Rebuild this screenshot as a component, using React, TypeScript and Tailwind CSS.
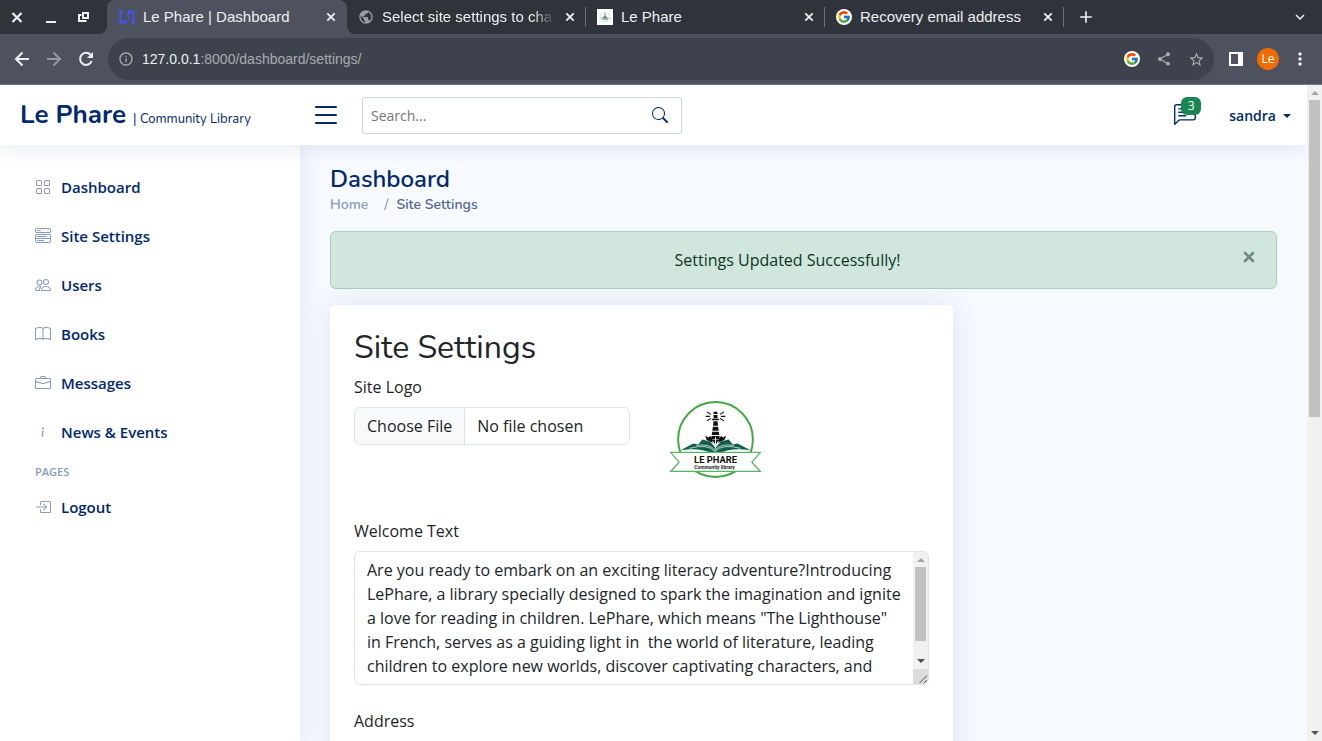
import type { ReactNode } from "react";
import {
  BsBook,
  BsBoxArrowInRight,
  BsBriefcase,
  BsChatLeftText,
  BsGrid,
  BsInfo,
  BsList,
  BsMenuButtonWide,
  BsPeople,
  BsSearch,
} from "react-icons/bs";
import {
  MdAdd,
  MdInfoOutline,
  MdKeyboardArrowDown,
  MdMoreVert,
  MdPublic,
  MdShare,
  MdStarOutline,
} from "react-icons/md";
import { FcGoogle } from "react-icons/fc";

const heading = "font-[Nunito,'Open_Sans',sans-serif]";

function LibraryLogo({ className }: { className: string }) {
  return (
    <svg className={className} viewBox="0 0 125 125" role="img" aria-label="Le Phare Community Library">
      <circle cx="62.5" cy="62.5" r="38" fill="#fff" stroke="#43a843" strokeWidth="2" />
      <g fill="#111">
        <path d="M60.500 35q2-2 4 0v1.500h-4zM60.500 37.500h4v3.500h-4zM59 41.500h7v1.500h-7zM60.500 44h4l.6 4.500h-5.200zM59.800 49.500h5.400l.5 4h-6.400zM59.200 54.500h6.600l.6 3.500h-7.800zM58.500 59h8l.5 3.500h-9z" />
        <path d="M52 58.500l3 2 2.500-1.500 2 4h6l2.500-4 2.500 1.500 3-2-2 4.500-9 4-9-4z" />
      </g>
      <path
        d="M54 34.500l4 2.500M52.500 39h4.500M54 43.500l4-2.500M71 34.500l-4 2.500M72.500 39h-4.500M71 43.500l-4-2.500"
        stroke="#111"
        strokeWidth="1.100"
        fill="none"
      />
      <path
        d="M27 73.500l13-7 5 1 4-5 8 2 5.500 6.500 5.500-6.500 8-2 4 5 5-1 13 7q-20-3-31 3h-9q-11-6-31-3z"
        fill="#0d5f4a"
      />
      <path
        d="M36 71.500q18-5 26 3q8-8 26-3M43 68.500q14-2 19 5q5-7 19-5"
        fill="none"
        stroke="#fff"
        strokeWidth=".7"
      />
      <path d="M62.500 60v12M59.500 64l3 6 3-6" stroke="#fff" strokeWidth="1" fill="none" />
      <path
        d="M17 75.500h91l-8.500 10 8.500 9.500H17l8.500-9.500z"
        fill="#fff"
        stroke="#58b365"
        strokeWidth="1.300"
      />
      <text
        x="62.500"
        y="86"
        textAnchor="middle"
        fontFamily="Roboto, sans-serif"
        fontWeight="700"
        fontSize="9.500"
        fill="#111"
      >
        LE PHARE
      </text>
      <text
        x="61.500"
        y="92.500"
        textAnchor="middle"
        fontFamily="Roboto, sans-serif"
        fontWeight="700"
        fontSize="5"
        fill="#222"
      >
        Community library
      </text>
    </svg>
  );
}

function TabClose({ title }: { title: string }) {
  return (
    <button aria-label={`Close ${title}`} className="shrink-0">
      <svg className="size-4" viewBox="0 0 16 16" stroke="currentColor" strokeWidth="1.800">
        <path d="M4.300 4.300l7.400 7.400M11.700 4.300l-7.400 7.400" />
      </svg>
    </button>
  );
}

function Tab({ icon, title, fade = "" }: { icon: ReactNode; title: string; fade?: string }) {
  return (
    <div className="my-[7px] flex h-5 w-[239px] shrink-0 items-center gap-2 border-r border-[#6a6e78] pr-[7px] pl-[11px]">
      {icon}
      <span className={`flex-1 whitespace-nowrap ${fade}`}>{title}</span>
      <TabClose title={title} />
    </div>
  );
}

function GoogleBadge() {
  return (
    <span className="flex size-4 shrink-0 items-center justify-center rounded-full bg-white">
      <FcGoogle size={14} />
    </span>
  );
}

function BrowserChrome() {
  return (
    <div className="shrink-0 border-b border-[#70747f] bg-[#4e525e] font-['Liberation_Sans',Arial,sans-serif] text-[#eeeff1]">
      <div className="flex h-[34px] bg-[#2f333b] text-[15px]">
        <div className="flex w-[107px] shrink-0 items-center gap-[17px] pl-[9px]">
          <button aria-label="Close window">
            <svg className="size-4" viewBox="0 0 16 16" stroke="currentColor" strokeWidth="2.200">
              <path d="M3.500 4l9 9M12.500 4l-9 9" />
            </svg>
          </button>
          <button aria-label="Minimize window">
            <svg className="size-4" viewBox="0 0 16 16" fill="currentColor">
              <path d="M4 12h10v2H4z" />
            </svg>
          </button>
          <button aria-label="Restore window">
            <svg className="size-4" viewBox="0 0 16 16" fill="none" stroke="currentColor" strokeWidth="2">
              <path d="M8 4h5v5H8zM6.500 6H4v6h6.500v-1" />
            </svg>
          </button>
        </div>
        <div className="relative flex w-60 shrink-0 items-center gap-2 rounded-t-lg bg-[#4e525e] pr-2 pl-3">
          <svg className="absolute bottom-0 -left-2 size-2 text-[#4e525e]" viewBox="0 0 8 8" fill="currentColor">
            <path d="M8 0v8H0a8 8 0 0 0 8-8z" />
          </svg>
          <svg className="absolute -right-2 bottom-0 size-2 text-[#4e525e]" viewBox="0 0 8 8" fill="currentColor">
            <path d="M0 0v8h8a8 8 0 0 1-8-8z" />
          </svg>
          <svg className="size-4 shrink-0" viewBox="0 0 16 16" fill="none" stroke="#4154f1" strokeWidth="2">
            <path d="M1.500 1v12.500h5v-3M14.500 15.500V2.500h-5V9" />
            <path d="M1 1l2.500 2.500M4 13.500L7.500 11M9 5l3-2.500M12.500 13l2.500 2.500" strokeWidth="1.500" />
          </svg>
          <span className="flex-1 whitespace-nowrap">Le Phare | Dashboard</span>
          <TabClose title="Le Phare | Dashboard" />
        </div>
        <Tab
          icon={<MdPublic className="shrink-0 text-[#9a9da6]" size={16} />}
          title="Select site settings to char"
          fade="min-w-0 mask-r-from-88%"
        />
        <Tab
          icon={
            <span className="size-4 shrink-0 bg-white">
              <LibraryLogo className="size-4" />
            </span>
          }
          title="Le Phare"
        />
        <Tab icon={<GoogleBadge />} title="Recovery email address" />
        <button aria-label="New tab" className="ml-3 flex items-center">
          <MdAdd size={20} />
        </button>
        <button aria-label="Search tabs" className="mr-[13px] ml-auto flex items-center">
          <MdKeyboardArrowDown size={18} />
        </button>
      </div>
      <div className="flex h-[50px] items-center">
        <div className="flex w-[108px] shrink-0 items-center gap-3 pl-3">
          <button aria-label="Back">
            <svg className="size-5" viewBox="0 0 20 20" fill="none" stroke="currentColor" strokeWidth="2">
              <path d="M17 10H4.500M10.500 3.500L4 10l6.500 6.500" />
            </svg>
          </button>
          <button aria-label="Forward" className="text-[#9598a1]">
            <svg className="size-5" viewBox="0 0 20 20" fill="none" stroke="currentColor" strokeWidth="2">
              <path d="M3 10h12.500M9.500 3.500L16 10l-6.500 6.500" />
            </svg>
          </button>
          <button aria-label="Reload">
            <svg className="size-5" viewBox="0 0 20 20" fill="none" stroke="currentColor" strokeWidth="2">
              <path d="M15.700 12A6 6 0 1 1 14.500 5.800L16 7.300" />
              <path d="M17 3v6h-6z" fill="currentColor" stroke="none" />
            </svg>
          </button>
        </div>
        <div className="flex h-[42px] flex-1 items-center gap-2 rounded-full bg-[#3e424c] pr-[9px] pl-[10px] text-sm text-[#a9abb1]">
          <MdInfoOutline className="shrink-0" size={16} />
          <span className="flex-1">
            <span className="text-[#eeeff1]">127.0.0.1</span>:8000/dashboard/settings/
          </span>
          <GoogleBadge />
          <button aria-label="Share" className="ml-2">
            <MdShare size={16} />
          </button>
          <button aria-label="Bookmark" className="ml-2">
            <MdStarOutline size={17} />
          </button>
        </div>
        <button aria-label="Side panel" className="ml-[14px]">
          <svg className="size-4" viewBox="0 0 16 16">
            <path d="M1 1h14v14H1z" fill="#fff" />
            <path d="M3 3h7v10H3z" fill="#4e525e" />
          </svg>
        </button>
        <button
          aria-label="Profile"
          className="ml-[13px] size-[22px] rounded-full bg-[#ef6c00] font-['Open_Sans',sans-serif] text-xs text-white"
        >
          Le
        </button>
        <button aria-label="Browser menu" className="mr-3 ml-[11px]">
          <MdMoreVert size={20} />
        </button>
      </div>
    </div>
  );
}

function NavLink({ icon, label }: { icon: ReactNode; label: string }) {
  return (
    <a
      href="#"
      className="mb-[5px] flex h-11 items-center gap-[10px] px-[15px] text-[15px] font-semibold text-[#012970]"
    >
      <span className="text-base text-[#899bbd]">{icon}</span>
      {label}
    </a>
  );
}

function Header() {
  return (
    <header className="z-20 flex h-15 shrink-0 items-center bg-white pl-5 shadow-[0_2px_20px_rgba(1,41,112,0.1)]">
      <a href="#" className={`${heading} flex w-[290px] shrink-0 items-baseline gap-[7px] pb-0.5 text-[#012970]`}>
        <span className="text-[26px] font-bold">Le Phare</span>
        <span className="text-[13px]">| Community Library</span>
      </a>
      <button aria-label="Toggle sidebar" className="text-[#012970]">
        <BsList size={32} />
      </button>
      <form className="ml-5 flex h-[37px] w-80 items-center rounded-[3px] border border-[#012970]/20 pr-[13px] pl-2">
        <input
          type="text"
          name="query"
          aria-label="Search"
          placeholder="Search..."
          className="min-w-0 flex-1 pt-0.5 text-sm outline-none placeholder:text-[#757575]"
        />
        <button type="button" aria-label="Submit search" className="text-[#012970]">
          <BsSearch size={16} />
        </button>
      </form>
      <nav className="ml-auto flex items-center pr-4">
        <a href="#" aria-label="Messages, 3 unread" className="relative mr-[33px] text-[#012970]">
          <BsChatLeftText size={22} />
          <span className="absolute -top-[7px] -right-[5px] flex h-[18px] w-5 items-center justify-center rounded-md bg-[#198754] text-xs text-white">
            3
          </span>
        </a>
        <button className="flex items-center gap-[7px] pt-0.5 text-sm font-semibold text-[#012970]">
          sandra
          <span className="border-x-4 border-t-4 border-x-transparent border-t-[#012970]" />
        </button>
      </nav>
    </header>
  );
}

function Sidebar() {
  return (
    <aside className="z-10 w-[300px] shrink-0 bg-white p-5 shadow-[0_0_20px_rgba(1,41,112,0.1)]">
      <NavLink icon={<BsGrid />} label="Dashboard" />
      <NavLink icon={<BsMenuButtonWide />} label="Site Settings" />
      <NavLink icon={<BsPeople />} label="Users" />
      <NavLink icon={<BsBook />} label="Books" />
      <NavLink icon={<BsBriefcase />} label="Messages" />
      <NavLink icon={<BsInfo />} label="News & Events" />
      <h2 className="mt-[10px] mb-[5px] ml-[15px] text-[11px] leading-4 font-semibold text-[#899bbd]">PAGES</h2>
      <NavLink icon={<BsBoxArrowInRight />} label="Logout" />
    </aside>
  );
}

function TextareaScrollbar() {
  return (
    <div className="absolute top-px right-px bottom-px flex w-[15px] flex-col items-center overflow-hidden rounded-r-[5px] bg-[#f1f1f1]">
      <span className="mt-[6px] border-x-4 border-b-4 border-x-transparent border-b-[#a3a3a3]" />
      <span className="mt-[5px] h-[74px] w-[11px] bg-[#c1c1c1]" />
      <span className="mt-auto mb-[6px] border-x-4 border-t-4 border-x-transparent border-t-[#505050]" />
      <svg className="size-[15px] bg-[#dcdcdc]" viewBox="0 0 15 15" stroke="#555" strokeWidth="1">
        <path d="M6.500 14L14 6.500M11 14l3-3" />
      </svg>
    </div>
  );
}

const welcomeText = `Are you ready to embark on an exciting literacy adventure?Introducing LePhare, a library specially designed to spark the imagination and ignite a love for reading in children. LePhare, which means "The Lighthouse" in French, serves as a guiding light in  the world of literature, leading children to explore new worlds, discover captivating characters, and`;

function Main() {
  return (
    <main className="min-w-0 flex-1 px-[30px] py-5">
      <h1 className={`${heading} mb-[3px] text-[24px] leading-7 font-semibold text-[#012970]`}>Dashboard</h1>
      <nav
        aria-label="Breadcrumb"
        className={`${heading} mb-[17px] flex text-sm leading-[18px] font-semibold text-[#899bbd]`}
      >
        <a href="#" className="mr-4">
          Home
        </a>
        <span className="mr-2">/</span>
        <span className="text-[#51678f]">Site Settings</span>
      </nav>
      <div
        role="alert"
        className="mb-4 flex items-start rounded-md border border-[#a3cfbb] bg-[#d1e7dd] py-4 pl-4 text-[#0a3622]"
      >
        <p className="flex-1 text-center">Settings Updated Successfully!</p>
        <button aria-label="Dismiss" className="flex w-12 justify-end pt-[3px] pr-[21px] text-[#6d8d7f]">
          <svg className="size-3" viewBox="0 0 12 12" stroke="currentColor" strokeWidth="2.600" strokeLinecap="round">
            <path d="M2 2l8 8M10 2l-8 8" />
          </svg>
        </button>
      </div>
      <div className="grid grid-cols-3 gap-6">
        <form className="col-span-2 rounded-[5px] bg-white p-6 text-[#212529] shadow-[0_0_30px_rgba(1,41,112,0.1)]">
          <h2 className={`${heading} mb-2 text-[32px] leading-[38px]`}>Site Settings</h2>
          <div className="mb-4 grid grid-cols-2 gap-6">
            <div>
              <label htmlFor="site-logo" className="mb-2 block">
                Site Logo
              </label>
              <input
                id="site-logo"
                type="file"
                className="block w-full overflow-hidden rounded-md border border-[#dee2e6] px-3 py-1.5 file:-mx-3 file:-my-1.5 file:mr-3 file:border-0 file:border-r file:border-solid file:border-[#dee2e6] file:bg-[#f8f9fa] file:px-3 file:py-1.5"
              />
            </div>
            <div className="flex h-32 items-center">
              <LibraryLogo className="size-[123px]" />
            </div>
          </div>
          <label htmlFor="welcome" className="mb-2 block">
            Welcome Text
          </label>
          <div className="relative mb-6">
            <textarea
              id="welcome"
              rows={5}
              defaultValue={welcomeText}
              className="block w-full resize-none overflow-hidden rounded-md border border-[#dee2e6] py-1.5 pr-[27px] pl-3"
            />
            <TextareaScrollbar />
          </div>
          <label htmlFor="address" className="mb-2 block">
            Address
          </label>
          <input id="address" type="text" className="block w-full rounded-md border border-[#dee2e6] px-3 py-1.5" />
        </form>
      </div>
    </main>
  );
}

function PageScrollbar() {
  return (
    <div className="flex w-[15px] shrink-0 flex-col items-center bg-[#f1f1f1]">
      <span className="mt-[6px] border-x-4 border-b-4 border-x-transparent border-b-[#a3a3a3]" />
      <span className="mt-[5px] h-[317px] w-[11px] bg-[#c1c1c1]" />
      <span className="mt-auto mb-[6px] border-x-4 border-t-4 border-x-transparent border-t-[#505050]" />
    </div>
  );
}

export default function App() {
  return (
    <div className="flex h-screen flex-col overflow-hidden font-['Open_Sans',sans-serif] text-base">
      <BrowserChrome />
      <div className="flex min-h-0 flex-1">
        <div className="flex min-w-0 flex-1 flex-col overflow-hidden bg-[#f6f9ff]">
          <Header />
          <div className="flex min-h-0 flex-1">
            <Sidebar />
            <Main />
          </div>
        </div>
        <PageScrollbar />
      </div>
    </div>
  );
}
